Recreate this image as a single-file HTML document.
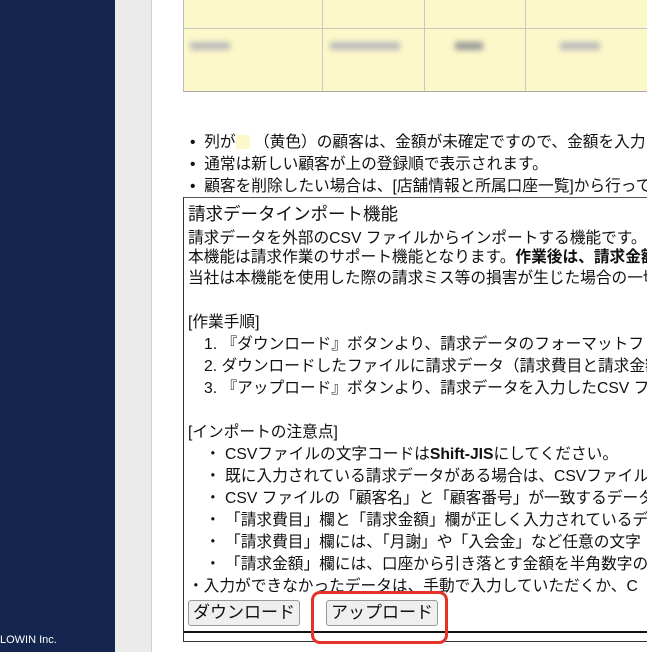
<!DOCTYPE html><html><head><meta charset="utf-8"><style>
body{margin:0;width:647px;height:652px;overflow:hidden;background:#fff;position:relative;font-family:"Liberation Sans","Noto Sans CJK JP",sans-serif;color:#111}
.a{position:absolute;white-space:nowrap;font-size:15.7px;line-height:20px}
.b{font-weight:bold}
</style></head><body>
<div style="position:absolute;left:0;top:0;width:115px;height:652px;background:#14264d"></div>
<div class="a" style="left:0;top:630px;color:#fff;font-size:11px">LOWIN Inc.</div>
<div style="position:absolute;left:115px;top:0;width:36px;height:652px;background:#ebebeb;border-right:1px solid #d0d0d0"></div>
<div style="position:absolute;left:183px;top:-1px;width:470px;height:91px;background:#fdf8c9;border:1px solid #bbb"></div>
<div style="position:absolute;left:183px;top:28px;width:470px;height:1px;background:#c8c8c8"></div>
<div style="position:absolute;left:322px;top:0;width:1px;height:91px;background:#c8c8c8"></div>
<div style="position:absolute;left:424px;top:0;width:1px;height:91px;background:#c8c8c8"></div>
<div style="position:absolute;left:525px;top:0;width:1px;height:91px;background:#c8c8c8"></div>
<div style="position:absolute;left:190px;top:42px;width:40px;height:8px;background:#bbb;filter:blur(3px)"></div>
<div style="position:absolute;left:330px;top:42px;width:70px;height:8px;background:#bbb;filter:blur(3px)"></div>
<div style="position:absolute;left:455px;top:42px;width:28px;height:8px;background:#999;filter:blur(3px)"></div>
<div style="position:absolute;left:560px;top:42px;width:40px;height:8px;background:#bbb;filter:blur(3px)"></div>
<div style="position:absolute;left:183px;top:91px;width:470px;height:1px;background:#aaa"></div>
<div class="a" style="left:190px;top:133px">•&nbsp; 列が<span style="display:inline-block;width:14px;height:14px;background:#fdf8c9;vertical-align:-2px"></span> （黄色）の顧客は、金額が未確定ですので、金額を入力</div>
<div class="a" style="left:190px;top:155px">•&nbsp; 通常は新しい顧客が上の登録順で表示されます。</div>
<div class="a" style="left:190px;top:177px">•&nbsp; 顧客を削除したい場合は、[店舗情報と所属口座一覧]から行って</div>
<div style="position:absolute;left:183px;top:197px;width:470px;height:443px;border:1px solid #333;border-top:1px solid #555"></div>
<div class="a" style="left:188px;top:203px;font-size:17.5px;line-height:22px">請求データインポート機能</div>
<div class="a" style="left:188px;top:229px">請求データを外部のCSV ファイルからインポートする機能です。</div>
<div class="a" style="left:188px;top:248px">本機能は請求作業のサポート機能となります。<span class="b">作業後は、請求金額</span></div>
<div class="a" style="left:188px;top:269px">当社は本機能を使用した際の請求ミス等の損害が生じた場合の一切</div>
<div class="a" style="left:188px;top:313px">[作業手順]</div>
<div class="a" style="left:204px;top:335px">1. 『ダウンロード』ボタンより、請求データのフォーマットフ</div>
<div class="a" style="left:204px;top:357px">2. ダウンロードしたファイルに請求データ（請求費目と請求金額</div>
<div class="a" style="left:204px;top:379px">3. 『アップロード』ボタンより、請求データを入力したCSV ファ</div>
<div class="a" style="left:188px;top:423px">[インポートの注意点]</div>
<div class="a" style="left:205px;top:445px">・ CSVファイルの文字コードは<span class="b">Shift-JIS</span>にしてください。</div>
<div class="a" style="left:205px;top:467px">・ 既に入力されている請求データがある場合は、CSVファイル</div>
<div class="a" style="left:205px;top:489px">・ CSV ファイルの「顧客名」と「顧客番号」が一致するデータ</div>
<div class="a" style="left:205px;top:511px">・ 「請求費目」欄と「請求金額」欄が正しく入力されているデ</div>
<div class="a" style="left:205px;top:533px">・ 「請求費目」欄には、「月謝」や「入会金」など任意の文字</div>
<div class="a" style="left:205px;top:555px">・ 「請求金額」欄には、口座から引き落とす金額を半角数字の</div>
<div class="a" style="left:188px;top:577px">・入力ができなかったデータは、手動で入力していただくか、C</div>
<div class="a" style="left:188px;top:600px;width:110px;height:24px;border:1px solid #999;border-radius:3px;background:#efefef;font-size:17px;line-height:24px;text-align:center">ダウンロード</div>
<div class="a" style="left:326px;top:600px;width:110px;height:24px;border:1px solid #999;border-radius:3px;background:#efefef;font-size:17px;line-height:24px;text-align:center">アップロード</div>
<div style="position:absolute;left:184px;top:631px;width:470px;height:2px;background:#111"></div>
<div style="position:absolute;left:311px;top:591px;width:131px;height:47px;border:3px solid #e53228;border-radius:9px"></div>
</body></html>
